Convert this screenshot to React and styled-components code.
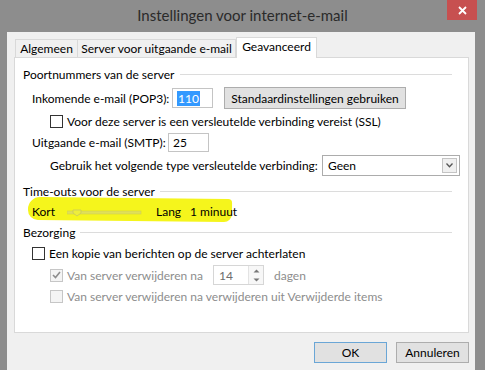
import React from "react";
import styled, { createGlobalStyle } from "styled-components";

const Global = createGlobalStyle`
  html, body { margin: 0; padding: 0; background: #8d8d8d; }
  body { font-family: Lato, "Open Sans", sans-serif; font-size: 12px; color: #000; }
`;

const Window = styled.div`
  width: 485px;
  height: 370px;
  background: #8d8d8d;
  display: flex;
  flex-direction: column;
  overflow: hidden;
`;

const TitleBar = styled.div`
  height: 32px;
  position: relative;
  display: flex;
  align-items: center;
  justify-content: center;
  font-size: 15px;
  color: #2a2a2a;
  padding-bottom: 2px;
  box-sizing: border-box;
`;

const CloseBtn = styled.div`
  position: absolute;
  top: 0;
  right: 8px;
  width: 30px;
  height: 20px;
  background: #c75050;
  display: flex;
  align-items: center;
  justify-content: center;
`;

const Client = styled.div`
  flex: 1;
  margin: 0 10px 0 7px;
  background: #f0f0f0;
  padding: 5px 6px 0 7px;
  display: flex;
  flex-direction: column;
`;

const TabRow = styled.div`
  display: flex;
  align-items: flex-end;
  padding-left: 1px;
  height: 21px;
  margin-bottom: -1px;
  position: relative;
  z-index: 1;
`;

const Tab = styled.div`
  box-sizing: border-box;
  height: ${(p) => (p.$active ? 21 : 19)}px;
  width: ${(p) => p.$w}px;
  padding-bottom: ${(p) => (p.$active ? 3 : 0)}px;
  border: 1px solid #d9d9d9;
  border-bottom: ${(p) => (p.$active ? "none" : "1px solid #d9d9d9")};
  border-left: ${(p) => (p.$first || p.$active ? "1px solid #d9d9d9" : "none")};
  background: ${(p) => (p.$active ? "#fff" : "#f0f0f0")};
  display: flex;
  align-items: center;
  justify-content: center;
  white-space: nowrap;
`;

const Panel = styled.div`
  width: 455px;
  height: 276px;
  box-sizing: border-box;
  background: #fff;
  border: 1px solid #d9d9d9;
  padding: 7px 8px 0 8px;
  display: flex;
  flex-direction: column;
`;

const GroupHeader = styled.div`
  height: 18px;
  display: flex;
  align-items: center;
  margin-top: ${(p) => p.$mt || 0}px;
  white-space: nowrap;
  &::after {
    content: "";
    flex: 1;
    height: 1px;
    background: #dcdcdc;
    margin-left: 5px;
    margin-right: 8px;
  }
`;

const Row = styled.div`
  display: flex;
  align-items: center;
  height: ${(p) => p.$h || 20}px;
  margin-top: ${(p) => p.$mt || 0}px;
  padding-left: ${(p) => p.$indent || 0}px;
  white-space: nowrap;
  color: ${(p) => (p.$disabled ? "#8d8d8d" : "#000")};
  position: relative;
`;

const Label = styled.span`
  width: ${(p) => (p.$w ? p.$w + "px" : "auto")};
  flex-shrink: 0;
`;

const TextBox = styled.div`
  box-sizing: border-box;
  width: 41px;
  height: ${(p) => p.$h || 20}px;
  border: 1px solid #c4c4c4;
  background: #fff;
  display: flex;
  align-items: center;
  padding-left: 4px;
`;

const Selected = styled.span`
  background: #3399ff;
  color: #fff;
  padding: 0 1px;
`;

const Button = styled.div`
  box-sizing: border-box;
  height: ${(p) => p.$h || 22}px;
  width: ${(p) => p.$w}px;
  margin-left: ${(p) => p.$ml || 0}px;
  border: 1px solid ${(p) => (p.$default ? "#6aa6d6" : "#adadad")};
  background: #e1e1e1;
  display: flex;
  align-items: center;
  justify-content: center;
`;

const Select = styled.div`
  box-sizing: border-box;
  width: 138px;
  height: 21px;
  border: 1px solid #acacac;
  background: #fff;
  display: flex;
  align-items: center;
  padding-left: 5px;
  justify-content: space-between;
`;

const SelectArrow = styled.div`
  width: 15px;
  height: 15px;
  margin-right: 2px;
  box-sizing: border-box;
  border: 1px solid #c4c4c4;
  background: #f0f0f0;
  display: flex;
  align-items: center;
  justify-content: center;
`;

const Box = styled.div`
  box-sizing: border-box;
  width: 13px;
  height: 13px;
  border: 1px solid ${(p) => (p.$disabled ? "#c6c6c6" : "#333")};
  background: ${(p) => (p.$disabled ? "#f4f4f4" : "#fff")};
  margin-right: 4px;
  flex-shrink: 0;
  display: flex;
  align-items: center;
  justify-content: center;
`;

const Highlight = styled(Row)`
  &::before {
    content: "";
    position: absolute;
    left: 5px;
    top: -3px;
    width: 204px;
    height: 23px;
    background: #f5f51c;
    border-radius: 12px 4px 8px 10px;
    transform: rotate(0.6deg);
    z-index: 0;
  }
  & > * {
    position: relative;
    z-index: 1;
  }
`;

const Track = styled.div`
  width: 76px;
  height: 10px;
  margin: 0 ${(p) => p.$gap}px 0 10px;
  position: relative;
`;

const Spin = styled.div`
  box-sizing: border-box;
  width: 51px;
  height: 20px;
  border: 1px solid #d6d6d6;
  background: #fff;
  display: flex;
  align-items: center;
  justify-content: space-between;
  padding-left: 5px;
  color: #6d6d6d;
  margin-right: 10px;
`;

const SpinArrows = styled.div`
  width: 14px;
  height: 18px;
  border-left: 1px solid #e3e3e3;
  display: flex;
  flex-direction: column;
  align-items: center;
  justify-content: space-around;
  background: #f7f7f7;
`;

const Footer = styled.div`
  display: flex;
  justify-content: flex-end;
  padding: 9px 0 0;
  gap: 9px;
`;

const Check = ({ checked, disabled }) => (
  <Box $disabled={disabled}>
    {checked && (
      <svg width="9" height="8" viewBox="0 0 9 8">
        <path d="M1 4 L3.5 6.5 L8 1" fill="none" stroke={disabled ? "#8d8d8d" : "#000"} strokeWidth="1.6" />
      </svg>
    )}
  </Box>
);

const App = () => (
  <Window>
    <Global />
    <TitleBar>
      Instellingen voor internet-e-mail
      <CloseBtn>
        <svg width="9" height="9" viewBox="0 0 9 9">
          <path d="M1 1 L8 8 M8 1 L1 8" stroke="#fff" strokeWidth="1.8" />
        </svg>
      </CloseBtn>
    </TitleBar>
    <Client>
      <TabRow>
        <Tab $first $w={63}>Algemeen</Tab>
        <Tab $w={158}>Server voor uitgaande e-mail</Tab>
        <Tab $active $w={81}>Geavanceerd</Tab>
      </TabRow>
      <Panel>
        <GroupHeader>Poortnummers van de server</GroupHeader>
        <Row $h={22} $mt={4} $indent={9}>
          <Label $w={140}>Inkomende e-mail (POP3):</Label>
          <TextBox>
            <Selected>110</Selected>
          </TextBox>
          <Button $w={182} $ml={11}>Standaardinstellingen gebruiken</Button>
        </Row>
        <Row $mt={2} $indent={27}>
          <Check />
          Voor deze server is een versleutelde verbinding vereist (SSL)
        </Row>
        <Row $mt={1} $indent={9}>
          <Label $w={136}>Uitgaande e-mail (SMTP):</Label>
          <TextBox $h={19}>25</TextBox>
        </Row>
        <Row $h={21} $mt={3} $indent={27}>
          <Label $w={272}>Gebruik het volgende type versleutelde verbinding:</Label>
          <Select>
            Geen
            <SelectArrow>
              <svg width="7" height="5" viewBox="0 0 7 5">
                <path d="M0.5 0.5 L3.5 3.8 L6.5 0.5" fill="none" stroke="#555" strokeWidth="1.3" />
              </svg>
            </SelectArrow>
          </Select>
        </Row>
        <GroupHeader $mt={6}>Time-outs voor de server</GroupHeader>
        <Highlight $mt={1} $indent={9}>
          <Label $w={25}>Kort</Label>
          <Track $gap={13}>
            <svg width="76" height="10" viewBox="0 0 76 10">
              <rect x="0" y="3" width="74" height="3" fill="#e0e05a" stroke="#cfcf4a" strokeWidth="0.6" />
              <path d="M6 2 L14 2 L14 5 L10 8 L6 5 Z" fill="#eeee3a" stroke="#c8c860" strokeWidth="0.8" />
            </svg>
          </Track>
          <Label $w={34}>Lang</Label>
          <Label>1 minuut</Label>
        </Highlight>
        <GroupHeader $mt={2}>Bezorging</GroupHeader>
        <Row $mt={2} $indent={9}>
          <Check />
          Een kopie van berichten op de server achterlaten
        </Row>
        <Row $mt={2} $indent={27} $disabled>
          <Check checked disabled />
          <Label $w={146}>Van server verwijderen na</Label>
          <Spin>
            14
            <SpinArrows>
              <svg width="7" height="4" viewBox="0 0 7 4">
                <path d="M0.5 3.5 L3.5 0.5 L6.5 3.5 Z" fill="#777" />
              </svg>
              <svg width="7" height="4" viewBox="0 0 7 4">
                <path d="M0.5 0.5 L3.5 3.5 L6.5 0.5 Z" fill="#777" />
              </svg>
            </SpinArrows>
          </Spin>
          dagen
        </Row>
        <Row $mt={1} $indent={27} $disabled>
          <Check disabled />
          Van server verwijderen na verwijderen uit Verwijderde items
        </Row>
      </Panel>
      <Footer>
        <Button $w={73} $h={21} $default>OK</Button>
        <Button $w={73} $h={21}>Annuleren</Button>
      </Footer>
    </Client>
  </Window>
);

export default App;
